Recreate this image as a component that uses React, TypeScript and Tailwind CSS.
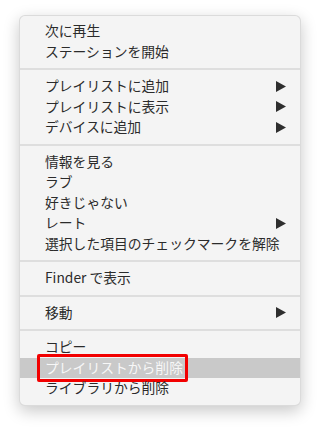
const Arrow = () => (
  <svg width="10" height="11" viewBox="0 0 10 11" className="shrink-0">
    <polygon points="0,0 10,5.5 0,11" fill="#2e2e2e" />
  </svg>
);

type Item = { label: string; sub?: boolean; selected?: boolean };

const groups: Item[][] = [
  [{ label: "次に再生" }, { label: "ステーションを開始" }],
  [
    { label: "プレイリストに追加", sub: true },
    { label: "プレイリストに表示", sub: true },
    { label: "デバイスに追加", sub: true },
  ],
  [
    { label: "情報を見る" },
    { label: "ラブ" },
    { label: "好きじゃない" },
    { label: "レート", sub: true },
    { label: "選択した項目のチェックマークを解除" },
  ],
  [{ label: "Finder で表示" }],
  [{ label: "移動", sub: true }],
  [
    { label: "コピー" },
    { label: "プレイリストから削除", selected: true },
    { label: "ライブラリから削除" },
  ],
];

const Row = ({ item }: { item: Item }) => (
  <div
    className={
      "relative flex h-[20.5px] items-center justify-between pl-[25px] pr-[14px] " +
      (item.selected ? "bg-[#c9c9c9] text-[#f7f7f7]" : "text-[#2b2b2b]")
    }
  >
    <span className="whitespace-nowrap">{item.label}</span>
    {item.sub && <Arrow />}
    {item.selected && (
      <div className="absolute -top-[4px] left-[17px] h-[28px] w-[151px] rounded-[2px] border-[3px] border-[#f20000]" />
    )}
  </div>
);

export default function App() {
  return (
    <div className="h-[428px] w-[321px] bg-white pt-[15px] pl-[19px]">
      <div
        className="w-[282px] rounded-[6px] border border-black/10 bg-[#f4f4f4] pt-[5px] pb-[6px] text-[13.8px] leading-none shadow-[0_5px_16px_rgba(0,0,0,0.22)]"
        style={{ fontFamily: '"Noto Sans CJK JP", "Noto Sans", sans-serif' }}
      >
        {groups.map((g, i) => (
          <div key={i}>
            {i > 0 && (
              <div className="flex h-[14px] items-center">
                <div className="h-[2px] w-full bg-[#dedede]" />
              </div>
            )}
            {g.map((item) => (
              <Row key={item.label} item={item} />
            ))}
          </div>
        ))}
      </div>
    </div>
  );
}
